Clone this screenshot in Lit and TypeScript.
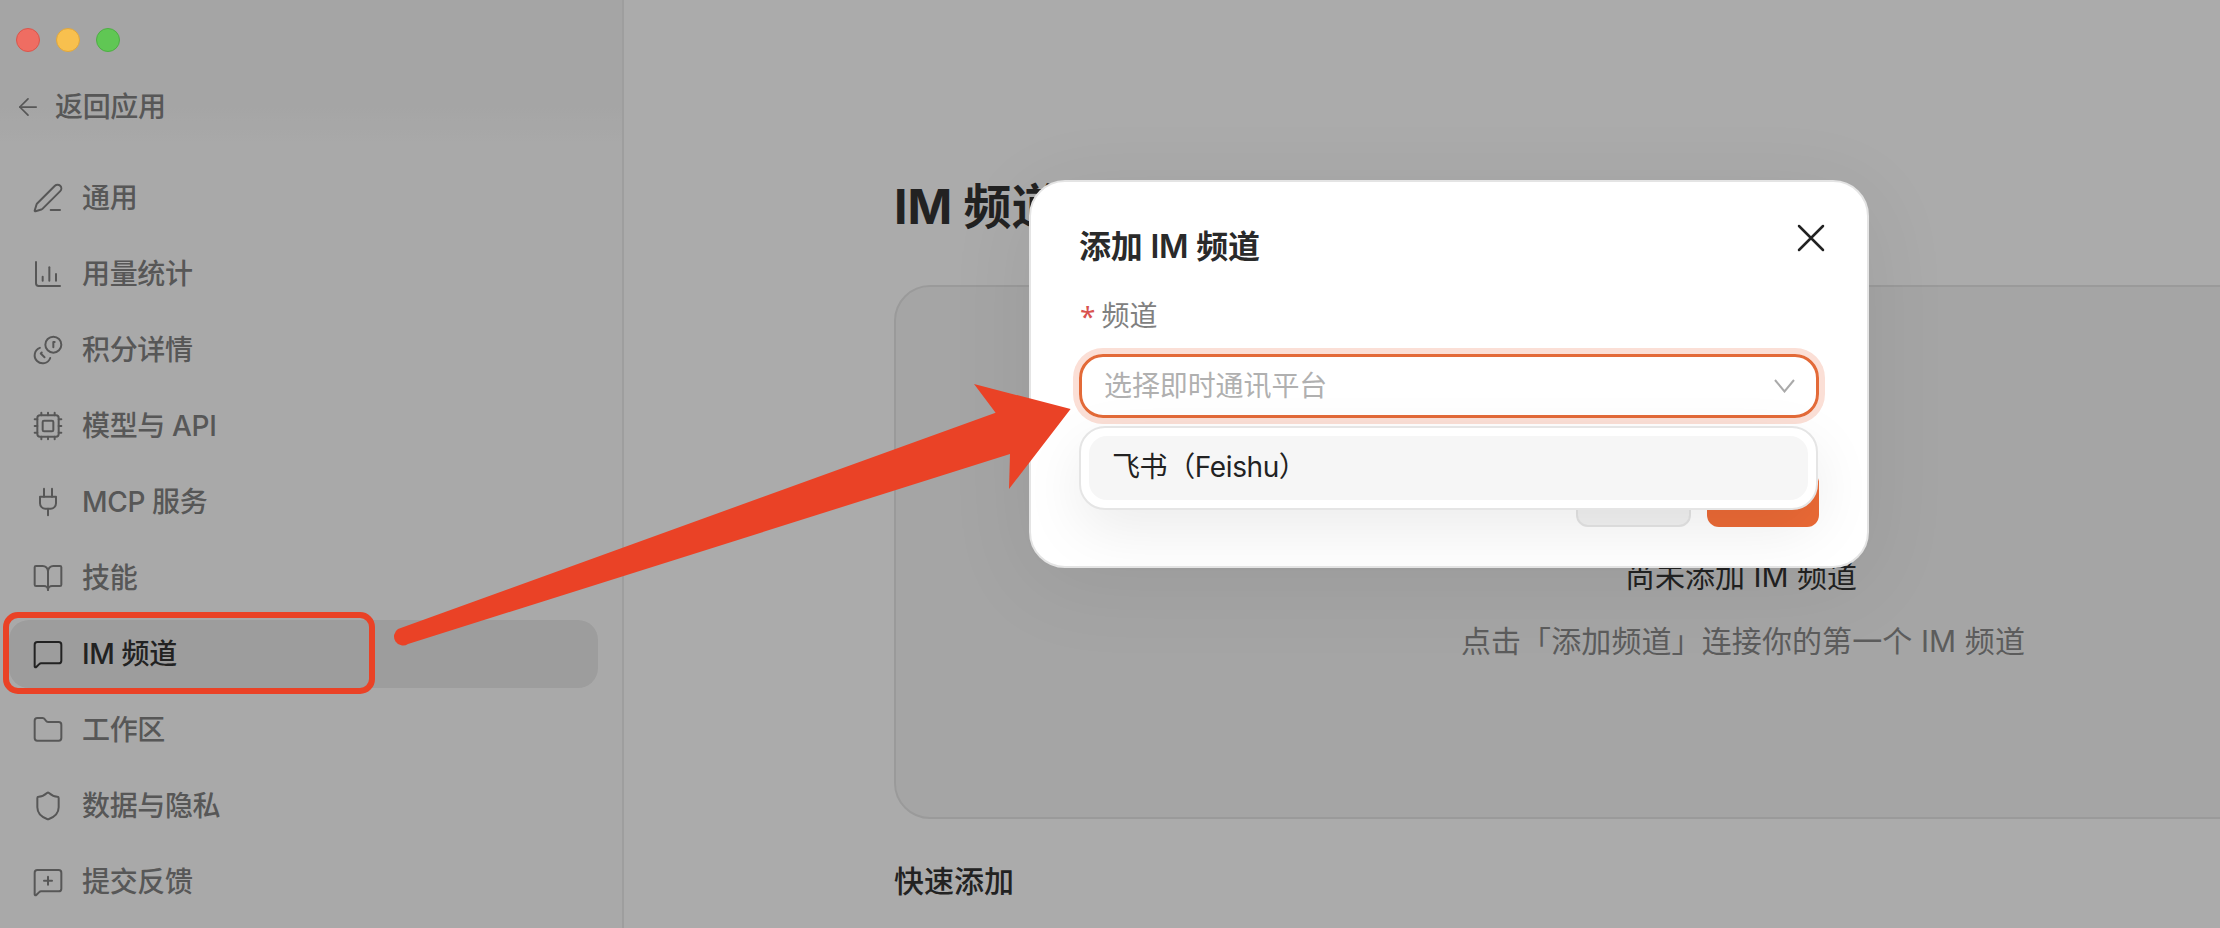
import { LitElement, html, css, svg } from 'lit';
import { customElement } from 'lit/decorators.js';

// lucide style paths, all on a 24 box
const icons: Record<string, unknown> = {
  pen: svg`<path d="M14 21h7"/><path d="M21.174 6.812a1 1 0 0 0-3.986-3.987L3.842 16.174a2 2 0 0 0-.5.83l-1.321 4.352a.5.5 0 0 0 .623.622l4.353-1.32a2 2 0 0 0 .83-.497z"/>`,
  chart: svg`<path d="M3 3v16a2 2 0 0 0 2 2h16"/><path d="M18 17v-5"/><path d="M13 17V7"/><path d="M8 17v-3"/>`,
  coins: svg`<g transform="matrix(-1 0 0 1 24 0)"><circle cx="8" cy="8" r="6"/><path d="M18.09 10.37A6 6 0 1 1 10.34 18"/><path d="M7 6h1v4"/><path d="m16.71 13.88.7.71-2.82 2.82"/></g>`,
  cpu: svg`<path d="M12 20v2M12 2v2M17 20v2M17 2v2M2 12h2M2 17h2M2 7h2M20 12h2M20 17h2M20 7h2M7 20v2M7 2v2"/><rect x="4" y="4" width="16" height="16" rx="2"/><rect x="8" y="8" width="8" height="8" rx="1"/>`,
  plug: svg`<path d="M12 22v-5"/><path d="M9 8V2"/><path d="M15 8V2"/><path d="M18 8v5a4 4 0 0 1-4 4h-4a4 4 0 0 1-4-4V8Z"/>`,
  book: svg`<path d="M12 7v14"/><path d="M3 18a1 1 0 0 1-1-1V4a1 1 0 0 1 1-1h5a4 4 0 0 1 4 4 4 4 0 0 1 4-4h5a1 1 0 0 1 1 1v13a1 1 0 0 1-1 1h-6a3 3 0 0 0-3 3 3 3 0 0 0-3-3z"/>`,
  message: svg`<path d="M22 17a2 2 0 0 1-2 2H6.828a2 2 0 0 0-1.414.586l-2.202 2.202A.71.71 0 0 1 2 21.286V5a2 2 0 0 1 2-2h16a2 2 0 0 1 2 2z"/>`,
  folder: svg`<path d="M20 20a2 2 0 0 0 2-2V8a2 2 0 0 0-2-2h-7.9a2 2 0 0 1-1.69-.9L9.6 3.9A2 2 0 0 0 7.93 3H4a2 2 0 0 0-2 2v13a2 2 0 0 0 2 2Z"/>`,
  shield: svg`<path d="M20 13c0 5-3.5 7.5-7.66 8.95a1 1 0 0 1-.67-.01C7.5 20.5 4 18 4 13V6a1 1 0 0 1 1-1c2 0 4.5-1.2 6.24-2.72a1.17 1.17 0 0 1 1.52 0C14.51 3.81 17 5 19 5a1 1 0 0 1 1 1z"/>`,
  feedback: svg`<path d="M22 17a2 2 0 0 1-2 2H6.828a2 2 0 0 0-1.414.586l-2.202 2.202A.71.71 0 0 1 2 21.286V5a2 2 0 0 1 2-2h16a2 2 0 0 1 2 2z"/><path d="M12 8v6"/><path d="M9 11h6"/>`,
};

const navItems = [
  { icon: 'pen', label: '通用' },
  { icon: 'chart', label: '用量统计' },
  { icon: 'coins', label: '积分详情' },
  { icon: 'cpu', label: '模型与 API' },
  { icon: 'plug', label: 'MCP 服务' },
  { icon: 'book', label: '技能' },
  { icon: 'message', label: 'IM 频道', active: true },
  { icon: 'folder', label: '工作区' },
  { icon: 'shield', label: '数据与隐私' },
  { icon: 'feedback', label: '提交反馈' },
];

@customElement('app-root')
export class AppRoot extends LitElement {
  static styles = css`
    :host {
      display: block;
      position: relative;
      width: 2220px;
      height: 928px;
      overflow: hidden;
      background: #fff;
      font-family: Inter, 'Noto Sans CJK SC', sans-serif;
      color: #333;
    }
    .page {
      display: flex;
      height: 928px;
    }
    .sidebar {
      width: 624px;
      flex: none;
      box-sizing: border-box;
      border-right: 2px solid #ececec;
      background: #fdfdfd;
    }
    .top {
      height: 164px;
      box-sizing: border-box;
      padding-top: 28px;
      background: linear-gradient(#f6f6f6 0, #f6f6f6 100px, #fdfdfd 150px);
    }
    .lights {
      display: flex;
      gap: 16px;
      padding-left: 16px;
      position: relative;
      z-index: 1; /* window controls stay lit above the backdrop */
    }
    .lights span {
      width: 24px;
      height: 24px;
      border-radius: 50%;
      box-sizing: border-box;
    }
    .red { background: #ef6d62; border: 1px solid #d9564c; }
    .yellow { background: #f8c04e; border: 1px solid #e0a63c; }
    .green { background: #60c754; border: 1px solid #4eae44; }
    .back {
      display: flex;
      align-items: center;
      gap: 13px;
      height: 40px;
      margin-top: 35px;
      padding-left: 14px;
      font-size: 28px;
      line-height: 40px;
      font-weight: 500;
      letter-spacing: -0.35px;
      color: #828282;
    }
    .back svg {
      width: 28px;
      height: 28px;
    }
    svg.icon {
      fill: none;
      stroke: currentColor;
      stroke-width: 1.5;
      stroke-linecap: round;
      stroke-linejoin: round;
      flex: none;
    }
    nav {
      display: flex;
      flex-direction: column;
      gap: 8px;
      padding: 0 24px 0 9px;
    }
    .item {
      display: flex;
      align-items: center;
      gap: 18px;
      height: 68px;
      padding-left: 23px;
      border-radius: 20px;
      font-size: 28px;
      line-height: 40px;
      font-weight: 500;
      letter-spacing: -0.35px;
      color: #828282;
    }
    .item svg {
      width: 32px;
      height: 32px;
    }
    .item.active {
      background: #eaeaea;
      color: #333;
    }
    main {
      flex: none;
      width: 1692px;
      padding: 175px 0 0 270px;
    }
    h1 {
      margin: 0 0 46px;
      font-size: 48px;
      line-height: 64px;
      font-weight: 700;
      color: #333;
    }
    .card {
      display: flex;
      flex-direction: column;
      align-items: center;
      gap: 21px;
      box-sizing: border-box;
      height: 534px;
      padding-top: 267px;
      border: 2px solid #e6e6e6;
      border-radius: 36px;
      background: #f7f7f7;
    }
    .empty-title {
      margin-left: 2px;
      font-size: 30px;
      line-height: 44px;
      color: #333;
    }
    .empty-sub {
      margin-left: 6px;
      font-size: 30px;
      line-height: 44px;
      letter-spacing: 0.1px;
      color: #8a8a8a;
    }
    h2 {
      margin: 40px 0 0;
      font-size: 30px;
      line-height: 44px;
      font-weight: 500;
      color: #333;
    }
    .backdrop {
      position: absolute;
      inset: 0;
      background: rgba(0, 0, 0, 0.33);
    }
    .modal {
      position: absolute;
      left: 1029px;
      top: 180px;
      width: 840px;
      height: 388px;
      box-sizing: border-box;
      padding: 43px 48px 0;
      border: 2px solid #e4e4e4;
      border-radius: 36px;
      background: #fff;
      overflow: hidden;
      box-shadow: 0 16px 90px rgba(0, 0, 0, 0.07);
    }
    .modal h3 {
      margin: 0;
      font-size: 32px;
      line-height: 44px;
      font-weight: 600;
      letter-spacing: -0.2px;
      color: #2a2a2a;
    }
    .close {
      position: absolute;
      right: 42px;
      top: 42px;
      width: 28px;
      height: 28px;
      display: block;
      stroke: #222;
      stroke-width: 2.5;
      stroke-linecap: round;
      fill: none;
    }
    .label {
      display: flex;
      align-items: center;
      gap: 6px;
      margin: 27px 0 18px 1px;
      font-size: 28px;
      line-height: 40px;
      color: #808080;
    }
    .label b {
      color: #d9534f;
      font-family: 'Noto Sans', sans-serif;
      font-weight: 400;
      font-size: 28px;
      line-height: 36px;
    }
    .field {
      position: relative;
    }
    .select {
      display: flex;
      align-items: center;
      justify-content: space-between;
      box-sizing: border-box;
      width: 740px;
      height: 64px;
      padding: 0 21px 0 22px;
      border: 3px solid #e36a38;
      border-radius: 24px;
      box-shadow: 0 0 0 6px #fbdfd6;
      font-size: 28px;
      line-height: 40px;
      letter-spacing: -0.1px;
      color: #b0b0b0;
    }
    .chev {
      width: 21px;
      height: 14px;
      stroke: #aaa;
      stroke-width: 2;
      fill: none;
    }
    .dropdown {
      position: absolute;
      left: 0;
      top: 72px;
      width: 739px;
      box-sizing: border-box;
      padding: 8px;
      border: 2px solid #e5e5e5;
      border-radius: 26px;
      background: #fff;
      box-shadow: 0 20px 60px rgba(0, 0, 0, 0.08);
    }
    .option {
      height: 64px;
      padding: 0 23px;
      border-radius: 18px;
      background: #f6f6f6;
      font-size: 28px;
      line-height: 62px;
      letter-spacing: -0.4px;
      color: #222;
    }
    .actions {
      display: flex;
      justify-content: flex-end;
      gap: 16px;
      margin-top: 53px;
    }
    .btn {
      height: 56px;
      box-sizing: border-box;
      border-radius: 12px;
    }
    .cancel {
      width: 115px;
      background: #f2f2f2;
      border: 2px solid #e4e4e4;
    }
    .ok {
      width: 112px;
      background: #ec6a36;
    }
    .notes {
      position: absolute;
      left: 0;
      top: 0;
      width: 2220px;
      height: 928px;
    }
  `;

  render() {
    return html`
      <div class="page">
        <aside class="sidebar">
          <div class="top">
            <div class="lights">
              <span class="red"></span><span class="yellow"></span><span class="green"></span>
            </div>
            <div class="back">
              <svg class="icon" viewBox="0 0 24 24"><path d="m12 19-7-7 7-7"/><path d="M19 12H5"/></svg>
              <span>返回应用</span>
            </div>
          </div>
          <nav>
            ${navItems.map(n => html`
              <div class="item ${n.active ? 'active' : ''}">
                <svg class="icon" viewBox="0 0 24 24">${icons[n.icon]}</svg>
                <span>${n.label}</span>
              </div>
            `)}
          </nav>
        </aside>
        <main>
          <h1>IM 频道</h1>
          <div class="card">
            <div class="empty-title">尚未添加 IM 频道</div>
            <div class="empty-sub">点击「添加频道」连接你的第一个 IM 频道</div>
          </div>
          <h2>快速添加</h2>
        </main>
      </div>

      <div class="backdrop"></div>

      <div class="modal">
        <h3>添加 IM 频道</h3>
        <svg class="close" viewBox="0 0 28 28"><path d="M2 2l24 24M26 2L2 26"/></svg>
        <div class="label"><b>*</b><span>频道</span></div>
        <div class="field">
          <div class="select">
            <span>选择即时通讯平台</span>
            <svg class="chev" viewBox="0 0 21 14"><path d="M1 1l9.5 11.5L20 1"/></svg>
          </div>
          <div class="actions">
            <div class="btn cancel"></div>
            <div class="btn ok"></div>
          </div>
          <div class="dropdown">
            <div class="option">飞书（Feishu）</div>
          </div>
        </div>
      </div>

      <svg class="notes" viewBox="0 0 2220 928">
        <rect x="6" y="615" width="366" height="76" rx="12" fill="none" stroke="#ea4226" stroke-width="6"/>
        <path fill="#ea4226" d="M398 629L995.6 412.7L974 384L1070.6 409L1009 489L1010 454L408 644A9 9 0 0 1 398 629Z"/>
      </svg>
    `;
  }
}
